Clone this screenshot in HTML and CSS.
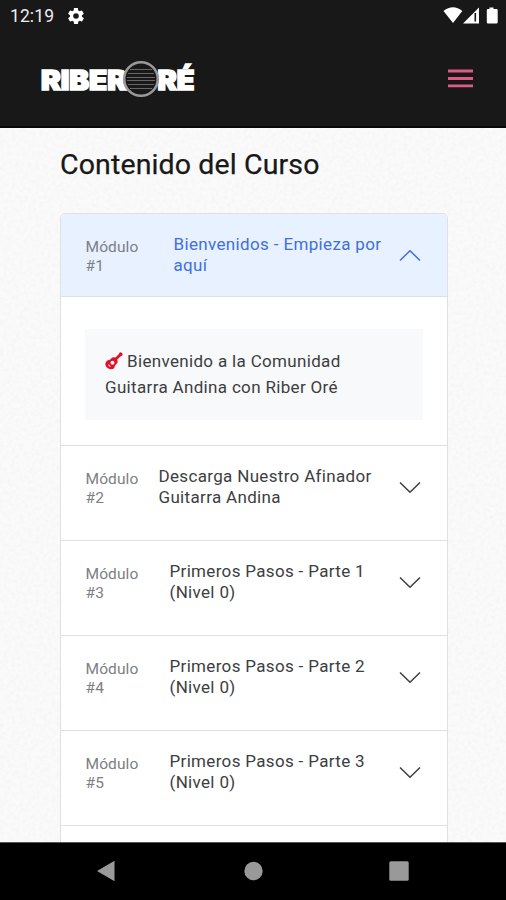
FILE: index.html
```html
<!DOCTYPE html>
<html lang="es">
<head>
<meta charset="utf-8">
<title>Contenido del Curso</title>
<link rel="stylesheet" href="styles.css">
</head>
<body>
<div class="phone">
  <header class="top">
    <div class="status">
      <span class="clock">12:19</span>
      <svg class="gear" width="16" height="16" viewBox="2 2 20 20"><path fill="#fff" fill-rule="evenodd" d="M19.4 13c.1-.3.1-.7.1-1s0-.7-.1-1l2.1-1.600c.2-.2.200-.4.100-.600l-2-3.500c-.1-.2-.4-.3-.6-.2l-2.500 1c-.5-.4-1.100-.7-1.700-1l-.4-2.600c0-.3-.2-.5-.5-.5h-4c-.3 0-.5.2-.5.5L9.100 5.100c-.6.3-1.200.6-1.700 1l-2.500-1c-.2-.1-.5 0-.6.2l-2 3.500c-.1.2-.1.500.1.600L4.500 11c0 .3-.1.700-.1 1s0 .7.100 1l-2.100 1.600c-.2.200-.2.400-.1.600l2 3.500c.1.200.4.300.6.200l2.500-1c.5.400 1.100.7 1.700 1l.4 2.600c0 .300.200.500.500.500h4c.3 0 .5-.2.500-.5l.4-2.600c.6-.3 1.200-.6 1.700-1l2.500 1c.2.100.5 0 .6-.2l2-3.500c.1-.2.1-.5-.1-.6zM12 15.500a3.500 3.500 0 1 1 0-7 3.500 3.500 0 0 1 0 7z"/></svg>
      <svg class="signals" width="56" height="18" viewBox="0 0 56 18"><path fill="#fff" d="M.5 5Q10 -2.500 19.300 5L10 17zM36 1.500V17.500H20z"/><path stroke="#191818" stroke-width="1.600" d="M32.300 7V15.500"/><path fill="#fff" d="M46.500 1.500h4v1.500h3q1.200 0 1.200 1.200v12q0 1.200-1.200 1.200h-8.500q-1.200 0-1.200-1.200v-12q0-1.200 1.200-1.200h1.500z"/></svg>
    </div>
    <div class="brandbar">
      <svg class="logo" width="158" height="42" viewBox="0 0 158 42">
        <g class="logo-text"><text x="1" y="31.500" textLength="86" lengthAdjust="spacingAndGlyphs">RIBER</text><text x="117.500" y="31.500" textLength="37" lengthAdjust="spacingAndGlyphs">RÉ</text></g>
        <circle cx="101" cy="21" r="16.800" fill="#191818" stroke="#999" stroke-width="2.600"/>
        <path stroke="#666" stroke-width="1" d="M90 11.500h22M88 15.500h26M87 19.500h28M87 22.500h28M88 26.500h26M90 30.500h22"/>
      </svg>
      <svg class="burger" width="25" height="20" viewBox="0 0 25 20"><path stroke="#dc5b87" stroke-width="2.800" d="M0 2H25M0 9.500H25M0 16.800H25"/></svg>
    </div>
  </header>
  <main class="content">
    <svg class="paper" aria-hidden="true"><filter id="grain"><feTurbulence type="fractalNoise" baseFrequency=".25" numOctaves="3"/><feColorMatrix values="0 0 0 0 .5  0 0 0 0 .5  0 0 0 0 .5  .16 0 0 0 -.06"/></filter><rect width="100%" height="100%" filter="url(#grain)"/></svg>
    <h1>Contenido del Curso</h1>
    <div class="accordion">
      <section>
        <div class="row open"><div class="module">Módulo<br>#1</div><div class="title">Bienvenidos - Empieza por<br>aquí</div><svg class="chevron" width="22" height="13" viewBox="0 0 22 13"><path d="M1 11.500 11 1.700 21 11.500"/></svg></div>
        <div class="panel"><div class="lesson"><svg class="guitar" width="18" height="18" viewBox="0 0 18 18"><path fill="#df1027" fill-rule="evenodd" d="M14.700.5q1-.8 1.900.2l.8.900q.6.900-.3 1.800l-2 1.400-3 3q1.400 2.500-.7 4.200-1.300.8-1.600 2.300-.4 2.800-3.300 3-3 .1-4.800-2Q-.2 13.200.7 10.500 1.500 8.300 4 8q1.500-.3 2.200-1.500 1.700-2 4.300-.9l3-3zM7.500 8.700a2 2 0 1 0 0 4 2 2 0 0 0 0-4zM3.700 12.300l-.6.600 2 2 .6-.6z"/></svg><span>Bienvenido a la Comunidad</span><br><span>Guitarra Andina con Riber Oré</span></div></div>
      </section>
      <section class="row wide"><div class="module">Módulo<br>#2</div><div class="title">Descarga Nuestro Afinador<br>Guitarra Andina</div><svg class="chevron" width="22" height="13" viewBox="0 0 22 13"><path d="M1 1.500 11 11.300 21 1.500"/></svg></section>
      <section class="row"><div class="module">Módulo<br>#3</div><div class="title">Primeros Pasos - Parte 1<br>(Nivel 0)</div><svg class="chevron" width="22" height="13" viewBox="0 0 22 13"><path d="M1 1.500 11 11.300 21 1.500"/></svg></section>
      <section class="row"><div class="module">Módulo<br>#4</div><div class="title">Primeros Pasos - Parte 2<br>(Nivel 0)</div><svg class="chevron" width="22" height="13" viewBox="0 0 22 13"><path d="M1 1.500 11 11.300 21 1.500"/></svg></section>
      <section class="row"><div class="module">Módulo<br>#5</div><div class="title">Primeros Pasos - Parte 3<br>(Nivel 0)</div><svg class="chevron" width="22" height="13" viewBox="0 0 22 13"><path d="M1 1.500 11 11.300 21 1.500"/></svg></section>
      <div class="next"></div>
    </div>
  </main>
  <nav class="navbar">
    <svg width="20" height="22" viewBox="0 0 20 22"><path fill="#999" d="M1 11 18.500.700V21.300z"/></svg>
    <svg width="20" height="20" viewBox="0 0 20 20"><circle cx="10.500" cy="10" r="9.200" fill="#999"/></svg>
    <svg width="20" height="20" viewBox="0 0 20 20"><rect x=".3" y=".3" width="19.400" height="19.400" rx="1.500" fill="#999"/></svg>
  </nav>
</div>
</body>
</html>
```
FILE: styles.css
```css
* { box-sizing: border-box; }
body { margin: 0; font-family: Roboto, "Liberation Sans", sans-serif; }
svg { display: block; flex: none; }
.phone { width: 506px; height: 900px; display: flex; flex-direction: column; overflow: hidden; }
.top { height: 128px; flex: none; background: #191818; border-bottom: 2px solid #080808; }
.status { height: 32px; display: flex; align-items: center; padding: 0 7px 0 10px; }
.clock { color: #eee; font-size: 17.5px; letter-spacing: .1px; width: 58px; }
.signals { margin-left: auto; margin-top: -2px; }
.brandbar { display: flex; justify-content: space-between; align-items: center; padding: 26px 33px 0 40px; }
.logo-text { fill: #fff; stroke: #fff; stroke-width: 1.6; font: 900 26.5px Inter, sans-serif; }
.content { position: relative; flex: 1; min-height: 0; overflow: hidden; background: #fafafa; padding: 19px 58px 0 60px; }
.paper { position: absolute; inset: 0; width: 100%; height: 100%; }
h1 { position: relative; margin: 0; font-size: 28.5px; line-height: 36px; letter-spacing: .13px; font-weight: 400; color: #181818; -webkit-text-stroke: .25px #181818; white-space: nowrap; }
.accordion { position: relative; margin-top: 30px; border: 1px solid #dfe0e1; border-radius: 5px 5px 0 0; background: #fff; overflow: hidden; }
.row { display: flex; height: 95px; padding: 20px 26px 0 24.5px; border-bottom: 1px solid #dfe0e1; color: #3c3e40; }
.row.open { height: 83px; background: #e7f1ff; color: #426fdb; }
.module { width: 84px; flex: none; font-size: 15.5px; line-height: 19px; color: #7c8084; padding-top: 4px; letter-spacing: .1px; }
.open .module { width: 88px; }
.wide .module { width: 73px; }
.title { font-size: 17px; line-height: 21px; letter-spacing: .33px; white-space: nowrap; }
.open .title { letter-spacing: .35px; }
.chevron { margin-left: auto; margin-top: 14.5px; fill: none; stroke: currentColor; stroke-width: 1.5; }
.panel { height: 149px; padding: 32px 24px 25px; border-bottom: 1px solid #dfe0e1; }
.lesson { height: 91px; padding: 19px 20px; background: #f8f9fa; font-size: 17px; line-height: 26px; letter-spacing: .33px; color: #3c3e40; white-space: nowrap; }
.guitar { display: inline-block; vertical-align: -3px; margin-right: 4px; }
.next { height: 20px; }
.navbar { height: 58px; flex: none; background: #000; border-top: 1px solid #555; display: flex; justify-content: space-between; align-items: center; padding: 0 97px 1px 96px; }
```
